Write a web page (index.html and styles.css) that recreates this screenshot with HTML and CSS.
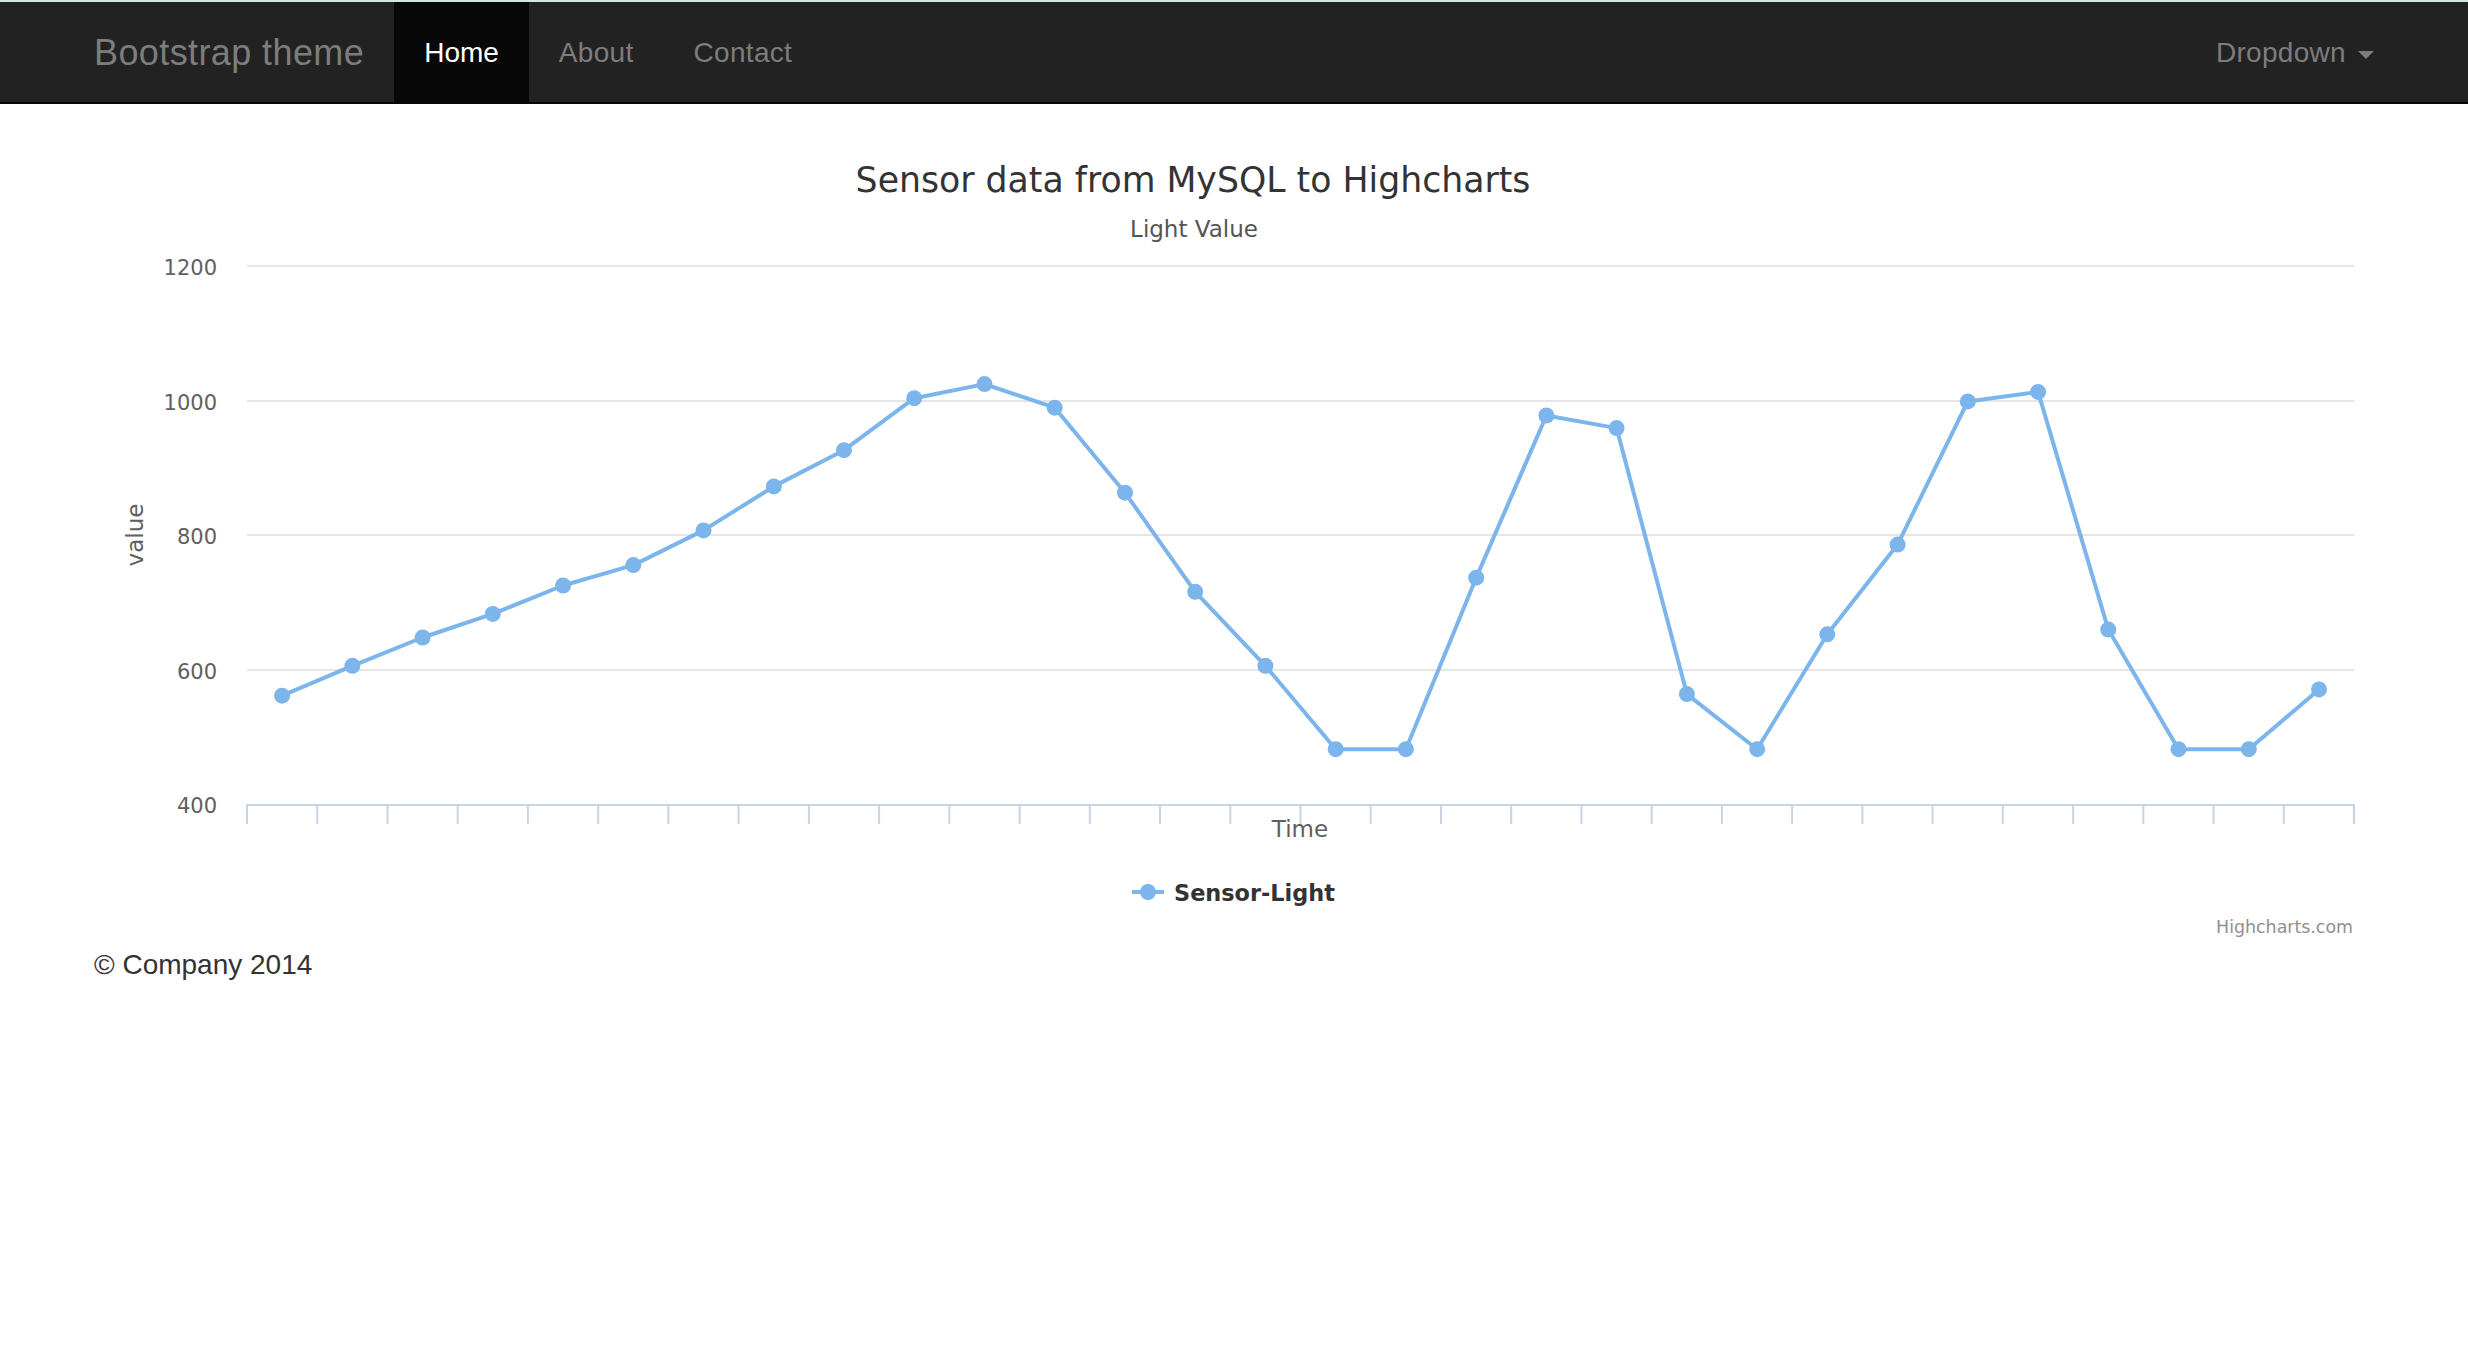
FILE: index.html
```html
<!DOCTYPE html>
<html lang="en">
<head>
<meta charset="utf-8">
<title>Bootstrap theme</title>
<link rel="stylesheet" href="styles.css">
</head>
<body>
<nav class="navbar">
  <div class="container nav-inner">
    <a class="brand" href="#">Bootstrap theme</a>
    <ul class="nav">
      <li class="active"><a href="#">Home</a></li>
      <li><a href="#">About</a></li>
      <li><a href="#">Contact</a></li>
    </ul>
    <ul class="nav nav-right">
      <li><a href="#">Dropdown <span class="caret"></span></a></li>
    </ul>
  </div>
</nav>

<div class="chart">
  <svg class="chart-svg" width="2468" height="841" viewBox="0 104 2468 841" xmlns="http://www.w3.org/2000/svg">
    <text class="c-title" x="1193" y="192" text-anchor="middle">Sensor data from MySQL to Highcharts</text>
    <text class="c-subtitle" x="1194" y="237" text-anchor="middle">Light Value</text>

    <g class="grid">
      <line x1="247" y1="266" x2="2354" y2="266"/>
      <line x1="247" y1="401" x2="2354" y2="401"/>
      <line x1="247" y1="535" x2="2354" y2="535"/>
      <line x1="247" y1="670" x2="2354" y2="670"/>
    </g>

    <g class="ylabels">
      <text x="217" y="275" text-anchor="end">1200</text>
      <text x="217" y="410" text-anchor="end">1000</text>
      <text x="217" y="544" text-anchor="end">800</text>
      <text x="217" y="679" text-anchor="end">600</text>
      <text x="217" y="813" text-anchor="end">400</text>
    </g>
    <text class="axis-title" x="0" y="0" text-anchor="middle" transform="translate(143 535) rotate(-90)">value</text>

    <g class="xaxis">
      <line x1="247" y1="805" x2="2354" y2="805"/>
      <path id="ticks" d=""/>
    </g>
    <text class="axis-title" x="1300" y="837" text-anchor="middle">Time</text>

    <polyline class="series" points="282.1,695.7 352.4,665.8 422.6,637.5 492.8,613.9 563.1,585.5 633.3,565.1 703.5,530.4 773.8,486.4 844.0,450.2 914.3,398.2 984.5,384.1 1054.7,407.7 1125.0,492.7 1195.2,591.8 1265.4,665.8 1335.7,749.2 1405.9,749.2 1476.2,577.7 1546.4,415.5 1616.6,428.1 1686.9,694.1 1757.1,749.2 1827.3,634.3 1897.6,544.6 1967.8,401.4 2038.1,391.9 2108.3,629.6 2178.5,749.2 2248.8,749.2 2319.0,689.4"/>
    <g class="markers">
      <circle cx="282.1" cy="695.7" r="8"/><circle cx="352.4" cy="665.8" r="8"/><circle cx="422.6" cy="637.5" r="8"/><circle cx="492.8" cy="613.9" r="8"/><circle cx="563.1" cy="585.5" r="8"/><circle cx="633.3" cy="565.1" r="8"/><circle cx="703.5" cy="530.4" r="8"/><circle cx="773.8" cy="486.4" r="8"/><circle cx="844.0" cy="450.2" r="8"/><circle cx="914.3" cy="398.2" r="8"/><circle cx="984.5" cy="384.1" r="8"/><circle cx="1054.7" cy="407.7" r="8"/><circle cx="1125.0" cy="492.7" r="8"/><circle cx="1195.2" cy="591.8" r="8"/><circle cx="1265.4" cy="665.8" r="8"/><circle cx="1335.7" cy="749.2" r="8"/><circle cx="1405.9" cy="749.2" r="8"/><circle cx="1476.2" cy="577.7" r="8"/><circle cx="1546.4" cy="415.5" r="8"/><circle cx="1616.6" cy="428.1" r="8"/><circle cx="1686.9" cy="694.1" r="8"/><circle cx="1757.1" cy="749.2" r="8"/><circle cx="1827.3" cy="634.3" r="8"/><circle cx="1897.6" cy="544.6" r="8"/><circle cx="1967.8" cy="401.4" r="8"/><circle cx="2038.1" cy="391.9" r="8"/><circle cx="2108.3" cy="629.6" r="8"/><circle cx="2178.5" cy="749.2" r="8"/><circle cx="2248.8" cy="749.2" r="8"/><circle cx="2319.0" cy="689.4" r="8"/>
    </g>

    <g class="legend">
      <line class="legend-line" x1="1132" y1="892" x2="1164" y2="892"/>
      <circle class="legend-dot" cx="1148" cy="892" r="8"/>
      <text class="legend-text" x="1174" y="901">Sensor-Light</text>
    </g>

    <text class="credits" x="2353" y="933" text-anchor="end">Highcharts.com</text>
  </svg>
</div>

<footer class="container footer">
  <p>© Company 2014</p>
</footer>

<script>
  (function () {
    var d = "";
    var left = 247, right = 2354, n = 30;
    for (var i = 0; i <= n; i++) {
      var x = left + (right - left) * i / n;
      d += "M" + x.toFixed(1) + " 804 V824 ";
    }
    document.getElementById("ticks").setAttribute("d", d);
  })();
</script>
</body>
</html>
```

FILE: styles.css
```css
html, body {
  margin: 0;
  padding: 0;
  background: #ffffff;
}

body {
  font-family: "Liberation Sans", Arial, Helvetica, sans-serif;
  color: #333333;
}

.container {
  width: 2340px;
  margin: 0 auto;
  padding: 0 30px;
  box-sizing: border-box;
}

/* Navbar */
.navbar {
  background: #222222;
  border-top: 2px solid #cfe9e1;
  border-bottom: 2px solid #080808;
  height: 100px;
}

.nav-inner {
  display: flex;
  align-items: stretch;
  height: 100px;
}

.brand {
  margin-left: -30px;
  padding: 31px 30px 29px;
  font-size: 36px;
  line-height: 40px;
  letter-spacing: 0.4px;
  color: #7d7d7d;
  text-decoration: none;
}

.nav {
  display: flex;
  list-style: none;
  margin: 0;
  padding: 0;
}

.nav li a {
  display: block;
  padding: 31px 30px 29px;
  font-size: 28px;
  line-height: 40px;
  letter-spacing: 0.3px;
  color: #7d7d7d;
  text-decoration: none;
}

.nav li.active a {
  background: #080808;
  color: #ffffff;
  letter-spacing: 0;
}

.nav-right {
  margin-left: auto;
  margin-right: -30px;
}

.caret {
  display: inline-block;
  width: 0;
  height: 0;
  margin-left: 4px;
  vertical-align: middle;
  border-top: 8px solid #7d7d7d;
  border-left: 8px solid transparent;
  border-right: 8px solid transparent;
}

/* Chart */
.chart-svg {
  display: block;
  font-family: "DejaVu Sans", "Lucida Grande", Verdana, sans-serif;
}

.c-title {
  font-size: 34.7px;
  fill: #333333;
}

.c-subtitle {
  font-size: 23px;
  fill: #555555;
}

.grid line {
  stroke: #e6e6e6;
  stroke-width: 2;
}

.ylabels text {
  font-size: 21px;
  fill: #606060;
}

.axis-title {
  font-size: 23px;
  fill: #606060;
}

.xaxis line,
.xaxis path {
  stroke: #c8d3e6;
  stroke-width: 2;
  fill: none;
}

.series {
  fill: none;
  stroke: #7cb5ec;
  stroke-width: 4;
  stroke-linejoin: round;
}

.markers circle,
.legend-dot {
  fill: #7cb5ec;
}

.legend-line {
  stroke: #7cb5ec;
  stroke-width: 4;
}

.legend-text {
  font-size: 22.4px;
  font-weight: bold;
  fill: #333333;
}

.credits {
  font-size: 17.4px;
  fill: #909090;
}

/* Footer */
.footer p {
  margin: 0;
  font-size: 28px;
  line-height: 40px;
  color: #333333;
}
```
